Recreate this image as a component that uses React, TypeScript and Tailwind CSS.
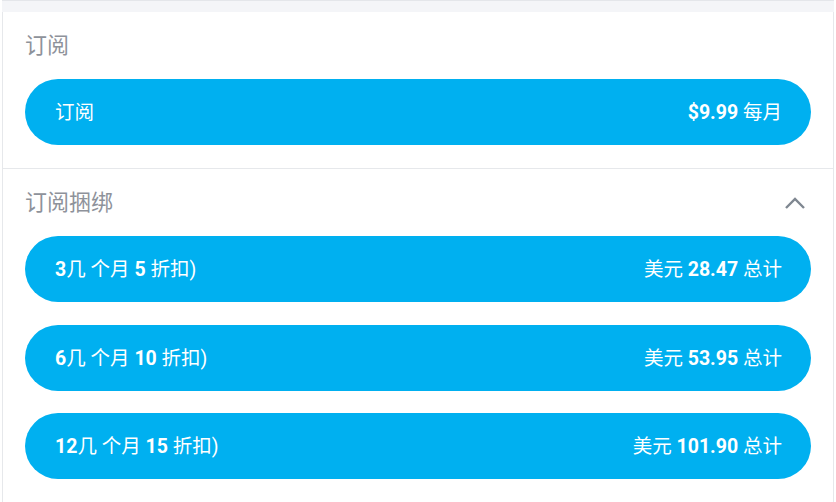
import React from "react";

const FONT = "font-['Roboto','Noto_Sans_CJK_SC',sans-serif]";

function Pill({ left, right }: { left: React.ReactNode; right: React.ReactNode }) {
  return (
    <div className="flex h-[66px] items-center justify-between rounded-full bg-[#00b0f0] pl-[30px] pr-[29px] pt-[2px] text-[19.5px] text-white">
      <div className="flex items-center whitespace-pre">{left}</div>
      <div className="flex items-center whitespace-pre">{right}</div>
    </div>
  );
}

const B = ({ children }: { children: React.ReactNode }) => <span className="font-bold">{children}</span>;
const N = ({ children }: { children: React.ReactNode }) => <span className="font-normal">{children}</span>;

export default function App() {
  return (
    <div className={`h-[502px] w-[836px] overflow-hidden bg-white ${FONT}`}>
      <div className="h-[12px] border-t border-[#e4e6ea] bg-[#f4f5f8] mx-[2px]" />
      <div className="mx-[2px] border-x border-[#e6e8eb] bg-white">
        <section className="px-[22px] pt-[22px] pb-[23px]">
          <div className="h-[24px] text-[22px] leading-[24px] text-[#8e929a]">订阅</div>
          <div className="mt-[21px]">
            <Pill
              left={<N>订阅</N>}
              right={
                <>
                  <B>$9.99</B>
                  <N> 每月</N>
                </>
              }
            />
          </div>
        </section>
        <div className="h-px bg-[#e6e8eb]" />
        <section className="px-[22px] pt-[22px] pb-[30px]">
          <div className="flex h-[24px] items-center justify-between">
            <div className="text-[22px] leading-[24px] text-[#8e929a]">订阅捆绑</div>
            <svg width="22" height="14" viewBox="0 0 22 14" className="mr-[5px] -mt-[1px]">
              <polyline points="2,12 11,3 20,12" fill="none" stroke="#7f8791" strokeWidth="2.4" />
            </svg>
          </div>
          <div className="mt-[21px] flex flex-col gap-[22.5px]">
            <Pill
              left={
                <>
                  <B>3</B>
                  <N>几 个月 </N>
                  <B>5</B>
                  <N> 折扣)</N>
                </>
              }
              right={
                <>
                  <N>美元 </N>
                  <B>28.47</B>
                  <N> 总计</N>
                </>
              }
            />
            <Pill
              left={
                <>
                  <B>6</B>
                  <N>几 个月 </N>
                  <B>10</B>
                  <N> 折扣)</N>
                </>
              }
              right={
                <>
                  <N>美元 </N>
                  <B>53.95</B>
                  <N> 总计</N>
                </>
              }
            />
            <Pill
              left={
                <>
                  <B>12</B>
                  <N>几 个月 </N>
                  <B>15</B>
                  <N> 折扣)</N>
                </>
              }
              right={
                <>
                  <N>美元 </N>
                  <B>101.90</B>
                  <N> 总计</N>
                </>
              }
            />
          </div>
        </section>
      </div>
    </div>
  );
}
